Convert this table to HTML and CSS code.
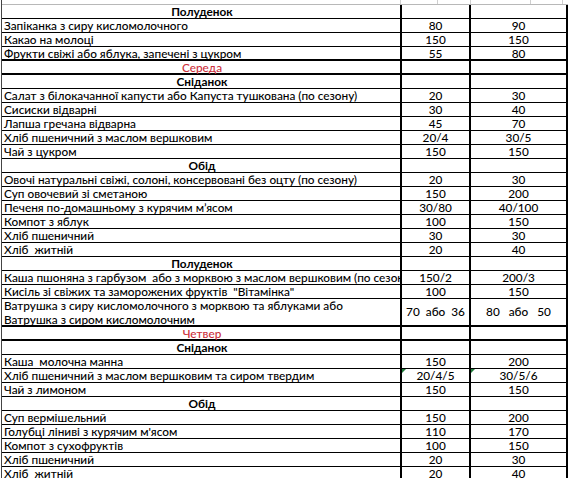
FILE: index.html
```html
<!DOCTYPE html>
<html lang="uk">
<head>
<meta charset="utf-8">
<title>Меню</title>
<link rel="stylesheet" href="styles.css">
</head>
<body>
<div class="sheet">
  <div class="strip">
    <span class="g g1"></span><span class="g g2"></span><span class="g g3"></span><span class="g g4"></span><span class="g g5"></span>
  </div>

  <div class="row head"><div class="c1">Полуденок</div><div class="c2"></div><div class="c3"></div></div>
  <div class="row"><div class="c1">Запіканка з сиру кисломолочного</div><div class="c2">80</div><div class="c3">90</div></div>
  <div class="row"><div class="c1">Какао на молоці</div><div class="c2">150</div><div class="c3">150</div></div>
  <div class="row thick"><div class="c1">Фрукти свіжі або яблука, запечені з цукром</div><div class="c2">55</div><div class="c3">80</div></div>
  <div class="row day thick"><div class="c1">Середа</div><div class="c2"></div><div class="c3"></div></div>
  <div class="row head"><div class="c1">Сніданок</div><div class="c2"></div><div class="c3"></div></div>
  <div class="row"><div class="c1">Салат з білокачанної капусти або Капуста тушкована (по сезону)</div><div class="c2">20</div><div class="c3">30</div></div>
  <div class="row"><div class="c1">Сисиски відварні</div><div class="c2">30</div><div class="c3">40</div></div>
  <div class="row"><div class="c1">Лапша гречана відварна</div><div class="c2">45</div><div class="c3">70</div></div>
  <div class="row"><div class="c1">Хліб пшеничний з маслом вершковим</div><div class="c2">20/4</div><div class="c3">30/5</div></div>
  <div class="row"><div class="c1">Чай з цукром</div><div class="c2">150</div><div class="c3">150</div></div>
  <div class="row head"><div class="c1">Обід</div><div class="c2"></div><div class="c3"></div></div>
  <div class="row"><div class="c1">Овочі натуральні свіжі, солоні, консервовані без оцту (по сезону)</div><div class="c2">20</div><div class="c3">30</div></div>
  <div class="row"><div class="c1">Суп овочевий зі сметаною</div><div class="c2">150</div><div class="c3">200</div></div>
  <div class="row"><div class="c1">Печеня по-домашньому з курячим м’ясом</div><div class="c2">30/80</div><div class="c3">40/100</div></div>
  <div class="row"><div class="c1">Компот з яблук</div><div class="c2">100</div><div class="c3">150</div></div>
  <div class="row"><div class="c1">Хліб пшеничний</div><div class="c2">30</div><div class="c3">30</div></div>
  <div class="row"><div class="c1">Хліб  житній</div><div class="c2">20</div><div class="c3">40</div></div>
  <div class="row head"><div class="c1">Полуденок</div><div class="c2"></div><div class="c3"></div></div>
  <div class="row"><div class="c1">Каша пшоняна з гарбузом  або з морквою з маслом вершковим (по сезону)</div><div class="c2">150/2</div><div class="c3">200/3</div></div>
  <div class="row"><div class="c1">Кисіль зі свіжих та заморожених фруктів  "Вітамінка"</div><div class="c2">100</div><div class="c3">150</div></div>
  <div class="row double thick"><div class="c1">Ватрушка з сиру кисломолочного з морквою та яблуками або<br>Ватрушка з сиром кисломолочним</div><div class="c2">70  або  36</div><div class="c3">80   або   50</div></div>
  <div class="row day thick"><div class="c1">Четвер</div><div class="c2"></div><div class="c3"></div></div>
  <div class="row head"><div class="c1">Сніданок</div><div class="c2"></div><div class="c3"></div></div>
  <div class="row"><div class="c1">Каша  молочна манна</div><div class="c2">150</div><div class="c3">200</div></div>
  <div class="row"><div class="c1">Хліб пшеничний з маслом вершковим та сиром твердим</div><div class="c2 flag">20/4/5</div><div class="c3 flag">30/5/6</div></div>
  <div class="row"><div class="c1">Чай з лимоном</div><div class="c2">150</div><div class="c3">150</div></div>
  <div class="row head"><div class="c1">Обід</div><div class="c2"></div><div class="c3"></div></div>
  <div class="row"><div class="c1">Суп вермішельний</div><div class="c2">150</div><div class="c3">200</div></div>
  <div class="row"><div class="c1">Голубці ліниві з курячим м'ясом</div><div class="c2">110</div><div class="c3">170</div></div>
  <div class="row"><div class="c1">Компот з сухофруктів</div><div class="c2">100</div><div class="c3">150</div></div>
  <div class="row"><div class="c1">Хліб пшеничний</div><div class="c2">20</div><div class="c3">30</div></div>
  <div class="row"><div class="c1">Хліб  житній</div><div class="c2">20</div><div class="c3">40</div></div>
</div>
</body>
</html>
```

FILE: styles.css
```css
html, body {
  margin: 0;
  padding: 0;
  background: #fff;
}

body {
  font-family: Lato, "Liberation Sans", Arial, sans-serif;
  font-size: 11.8px;
  font-weight: 500;
  color: #000;
  overflow: hidden;
}

.sheet {
  margin-left: 1px;
  width: 566px;
  border-left: 1px solid #444;
}

.strip {
  display: flex;
  height: 5px;
  box-sizing: border-box;
  border-bottom: 1px solid #b8b8b8;
}

.g {
  display: block;
  box-sizing: border-box;
  height: 100%;
  border-right: 1px solid #cfcfcf;
}
.g1 { width: 399px; }
.g2 { width: 37px; }
.g3 { width: 33px; }
.g4 { width: 60px; }
.g5 { width: 32px; }

.row {
  display: grid;
  grid-template-columns: 400px 69px 97px;
  height: 14px;
  box-sizing: border-box;
  border-bottom: 1px solid #000;
}

/* thick rule: second pixel drawn inside the row's last line */
.row.thick {
  box-shadow: inset 0 -1px 0 #000;
}

.row.double {
  height: 28px;
}

.c1, .c2, .c3 {
  box-sizing: border-box;
  border-right: 2px solid #000;
  white-space: pre;
  line-height: 13px;
}

.c1 {
  padding-left: 2px;
  overflow-x: clip;
  overflow-y: visible;
}

.c2, .c3 {
  text-align: center;
}

.double .c1 {
  line-height: 13.5px;
}

.double .c2, .double .c3 {
  line-height: 26px;
}

.head .c1 {
  text-align: center;
  font-weight: bold;
}

.day .c1 {
  text-align: center;
  color: #cc2f3a;
}

.flag {
  position: relative;
}

.flag::before {
  content: "";
  position: absolute;
  left: 0;
  top: 0;
  border-top: 4px solid #1f7a3a;
  border-right: 4px solid transparent;
}
```
